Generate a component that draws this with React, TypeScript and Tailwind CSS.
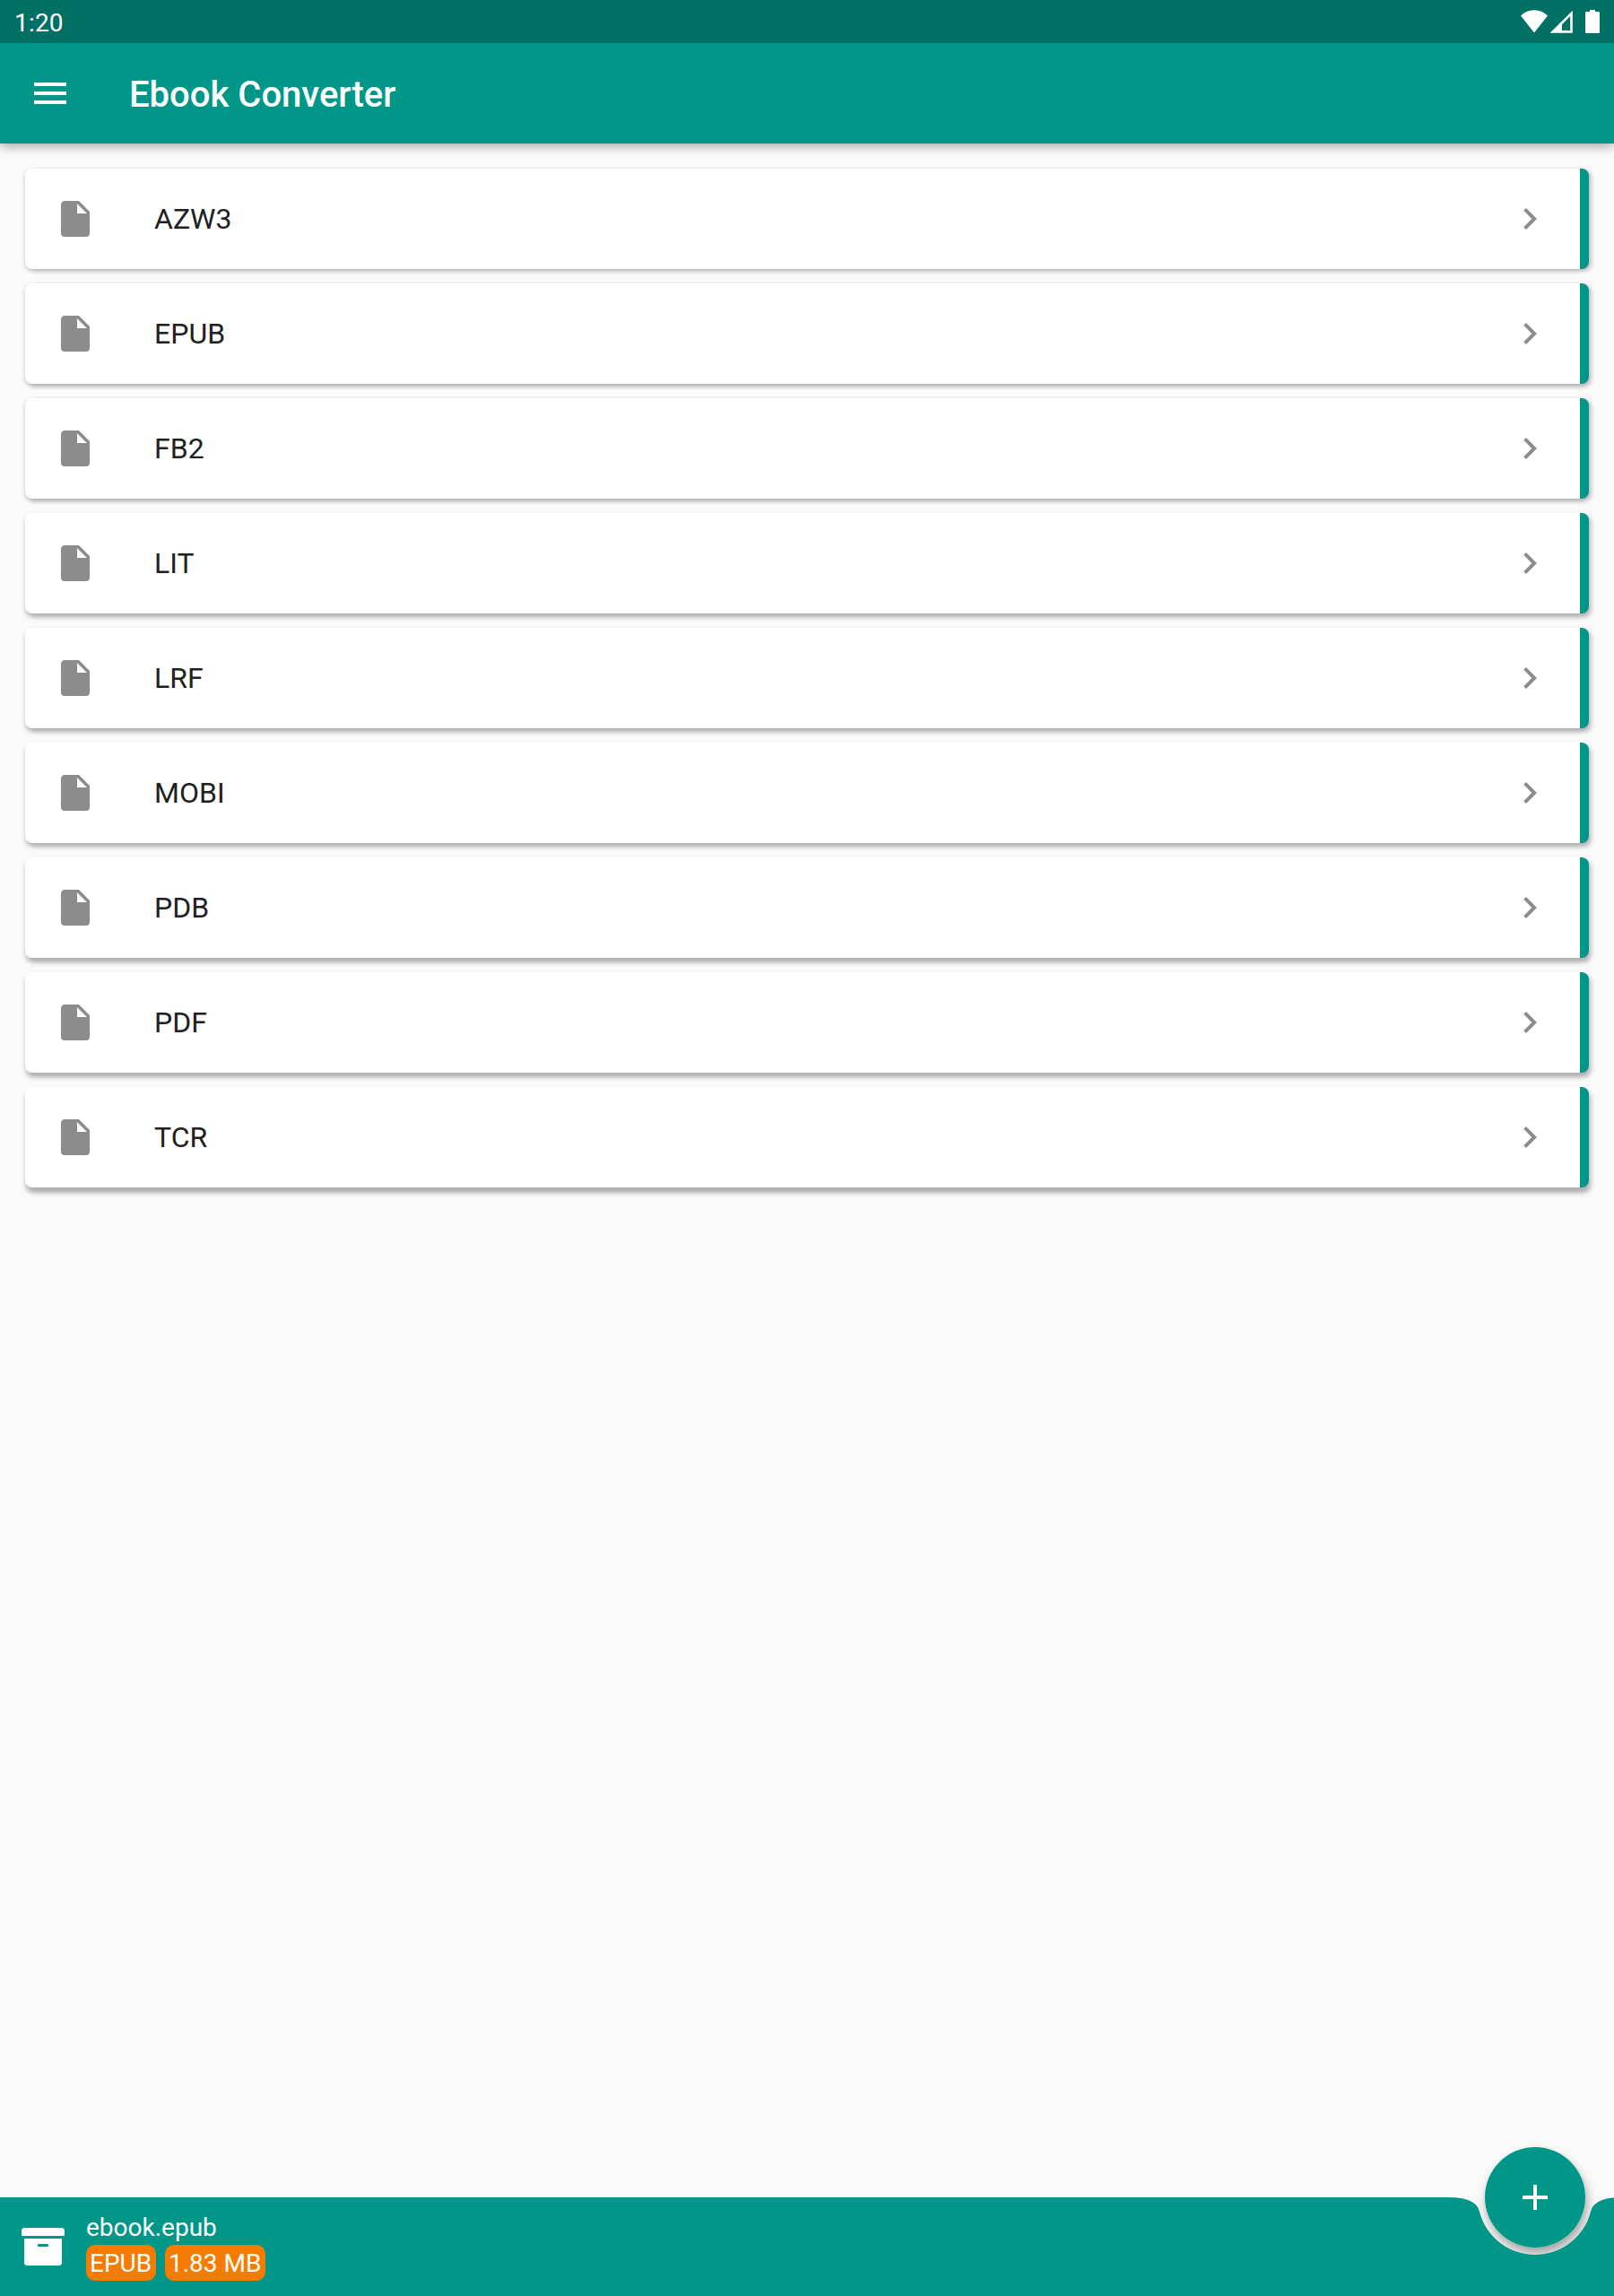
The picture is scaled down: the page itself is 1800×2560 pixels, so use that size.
const formats = ["AZW3", "EPUB", "FB2", "LIT", "LRF", "MOBI", "PDB", "PDF", "TCR"];

const StatusBar = () => {
  return (
    <div className="relative z-20 flex h-12 items-center justify-between bg-[#007065] px-4 text-white">
      <span className="pt-[3px] text-[28px] leading-none tracking-[0.2px]">1:20</span>
      <svg className="h-12 w-[88px]" viewBox="0 0 88 48" fill="currentColor">
        <path d="M15 36.4L0 17.6Q6.500 11.300 15 11.300T30 17.600Z" />
        <path fillRule="evenodd" d="M32.600 36.800L57.800 11.800V36.800ZM46 34H55.200V18L46 27.200Z" />
        <path d="M77 11h6v2h3.400c.9 0 1.600.7 1.600 1.600v20.800c0 .9-.7 1.600-1.600 1.600H73.600c-.9 0-1.600-.7-1.600-1.600V14.600c0-.9.7-1.600 1.600-1.600H77z" />
      </svg>
    </div>
  );
};

const Header = () => {
  return (
    <header className="relative z-10 flex h-28 items-center bg-[#009688] px-8 text-white shadow-[0_3px_12px_rgba(0,0,0,0.35)]">
      <button type="button" aria-label="Menu">
        <svg className="size-12" viewBox="0 0 24 24" fill="currentColor">
          <path d="M3 18h18v-2H3v2zm0-5h18v-2H3v2zm0-7v2h18V6H3z" />
        </svg>
      </button>
      <h1 className="ml-16 pt-[3px] text-[40px] font-medium leading-none">Ebook Converter</h1>
    </header>
  );
};

const FormatRow = ({ name, index }: { name: string; index: number }) => {
  // Shadows get longer the further down the list the card is
  const drop = 2 + index * 0.4;

  return (
    <li
      className="flex h-28 items-center rounded-lg border-r-[10px] border-[#009688] bg-white px-8"
      style={{
        boxShadow: `-1px ${drop}px 5px rgba(0,0,0,0.13), 3px ${drop}px 5px rgba(0,0,0,0.2)`,
      }}
    >
      <svg className="size-12 text-[#8c8c8c]" viewBox="0 0 24 24" fill="currentColor">
        <path d="M13 9V3.500L18.500 9M6 2C4.890 2 4 2.890 4 4V20A2 2 0 0 0 6 22H18A2 2 0 0 0 20 20V8L14 2H6Z" />
      </svg>
      <span className="ml-16 flex-1 text-[32px] leading-none text-[#212121]">{name}</span>
      <svg className="size-12 text-[#8c8c8c]" viewBox="0 0 24 24" fill="currentColor">
        <path d="M10 6L8.590 7.410 13.170 12l-4.580 4.590L10 18l6-6z" />
      </svg>
    </li>
  );
};

const BottomBar = () => {
  return (
    <footer className="relative h-[110px] text-white">
      {/* Button shadow, it only shows through the notch */}
      <div className="absolute -top-14 right-8 size-28 rounded-full shadow-[2px_7px_12px_rgba(0,0,0,0.35)]" />
      {/* Bar with a notch cut out for the floating button */}
      <svg className="absolute inset-0 h-[110px] w-[1800px]" viewBox="0 0 1800 110" fill="#009688">
        <path d="M0 0H1616Q1646 0 1649.940 15.640A64 64 0 0 0 1774.060 15.640Q1778 0 1808 0V110H0Z" />
      </svg>
      <div className="relative flex h-full pl-6">
        <svg className="mt-[31px] size-12" viewBox="0 0 512 512" fill="currentColor">
          <path d="M32 448c0 17.700 14.300 32 32 32h384c17.700 0 32-14.300 32-32V160H32v288zm160-212c0-6.600 5.400-12 12-12h104c6.600 0 12 5.400 12 12v8c0 6.600-5.400 12-12 12H204c-6.600 0-12-5.400-12-12v-8zM480 32H32C14.300 32 0 46.300 0 64v48c0 8.800 7.200 16 16 16h480c8.800 0 16-7.200 16-16V64c0-17.700-14.300-32-32-32z" />
        </svg>
        <div className="ml-6 pt-4 text-[28px]">
          <p className="h-[37px] leading-[36px]">ebook.epub</p>
          <div className="flex gap-[10px] leading-[41px]">
            <span className="h-10 w-[78px] rounded-[10px] bg-[#f57c00] pl-1">EPUB</span>
            <span className="h-10 w-28 rounded-[10px] bg-[#f57c00] pl-1">1.83 MB</span>
          </div>
        </div>
      </div>
      <button
        type="button"
        aria-label="Add"
        className="absolute -top-14 right-8 flex size-28 items-center justify-center rounded-full bg-[#009688]"
      >
        <svg className="size-12" viewBox="0 0 24 24" fill="currentColor">
          <path d="M19 13h-6v6h-2v-6H5v-2h6V5h2v6h6v2z" />
        </svg>
      </button>
    </footer>
  );
};

const App = () => {
  return (
    <div className="flex h-[2560px] w-[1800px] flex-col overflow-hidden bg-[#fafafa] font-[Roboto,sans-serif]">
      <StatusBar />
      <Header />
      <ul className="flex flex-1 flex-col gap-4 p-7">
        {formats.map((name, index) => (
          <FormatRow key={name} name={name} index={index} />
        ))}
      </ul>
      <BottomBar />
    </div>
  );
};

export default App;
